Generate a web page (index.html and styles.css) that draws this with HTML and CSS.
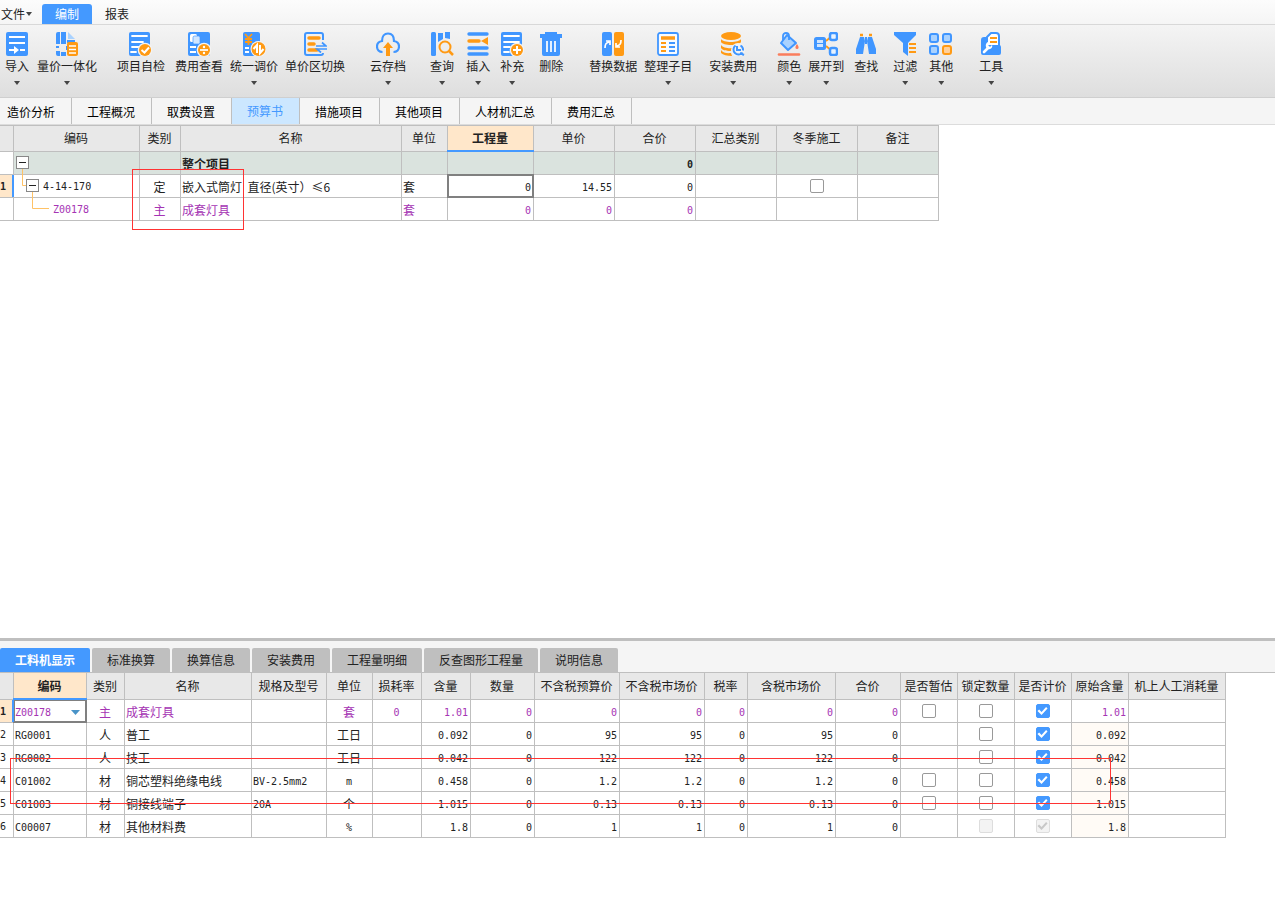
FILE: index.html
```html
<!DOCTYPE html>
<html lang="zh-CN">
<head>
<meta charset="utf-8">
<title>预算书</title>
<link rel="stylesheet" href="styles.css">
</head>
<body>
<nav class="menu">
  <button class="menu-item menu-file">文件<i class="caret"></i></button>
  <button class="menu-item is-active">编制</button>
  <button class="menu-item">报表</button>
</nav>

<div class="toolbar">
  <button class="tool"><svg viewBox="0 0 24 24"><rect x="1" width="22" height="24" rx="2" fill="#4096ff"/><path d="M4 5h16M4 11h16M15 18h5" stroke="#fff" stroke-width="2"/><path d="M4 17h5v-3l5 4-5 4v-3H4z" fill="#fff"/></svg><span>导入</span><i class="caret"></i></button>
  <button class="tool gap-8"><svg viewBox="0 0 24 24"><path d="M3 0h2v12H1V2a2 2 0 0 1 2-2zM6 0h5v12H6zM1 19h4v5H3a2 2 0 0 1-2-2zM6 20h5v4H6zM11 14h3v4h-3zM1 14h3v2H1zM12 0v8h8v3h-8V7z" fill="#4096ff"/><path d="M13 0l7 7h-7z" fill="#a9d2ff"/><rect x="12" y="10" width="11" height="14" rx="2" fill="#ff9a14"/><path d="M14 14h7M14 17.500h7M14 21h7" stroke="#fff" stroke-width="1.600"/></svg><span>量价一体化</span><i class="caret"></i></button>
  <button class="tool gap-20"><svg viewBox="0 0 24 24"><rect x="0" width="21" height="24" rx="2" fill="#4096ff"/><path d="M3 4h15M3 10h11M3 15h7M2 20h5" stroke="#fff" stroke-width="1.800" stroke-linecap="round"/><circle cx="16" cy="18" r="7.300" fill="#f3f3f3"/><circle cx="16" cy="18" r="6" fill="#ff9a14"/><path d="M12.500 18l3 2.500 4.500-5" fill="none" stroke="#fff" stroke-width="2"/></svg><span>项目自检</span></button>
  <button class="tool gap-10"><svg viewBox="0 0 24 24"><rect x="1" width="22" height="24" rx="2" fill="#4096ff"/><rect x="3" y="2" width="7" height="8" rx="1.500" fill="#fff"/><rect x="6" y="4" width="7" height="8" rx="1.500" fill="#cfe5ff" stroke="#4096ff" stroke-width=".7"/><path d="M3 15h6M3 20h6" stroke="#fff" stroke-width="1.800"/><circle cx="17" cy="18" r="7.300" fill="#f3f3f3"/><circle cx="17" cy="18" r="6" fill="#ff9a14"/><path d="M13 18h8" stroke="#fff" stroke-width="1.700"/><circle cx="17" cy="15" r="1.200" fill="#fff"/><circle cx="17" cy="21" r="1.200" fill="#fff"/></svg><span>费用查看</span></button>
  <button class="tool gap-7"><svg viewBox="0 0 24 24"><rect x="1" width="17" height="24" rx="2" fill="#4096ff"/><path d="M3 2l3.500 4L10 2M6.500 6v7M3 7h7M3 10h7" fill="none" stroke="#ff9a14" stroke-width="1.800"/><path d="M3 16h4M3 20h4" stroke="#fff" stroke-width="1.800"/><circle cx="16.500" cy="17" r="8" fill="#f3f3f3"/><circle cx="16.500" cy="17" r="7" fill="#ff9a14"/><path d="M15 21v-8l-3.500 4M18 13v8l3.500-4" fill="none" stroke="#fff" stroke-width="2"/></svg><span>统一调价</span><i class="caret"></i></button>
  <button class="tool gap-7"><svg viewBox="0 0 24 24"><path d="M20 8V3a2 2 0 0 0-2-2H4a2 2 0 0 0-2 2v18a2 2 0 0 0 2 2h14a2 2 0 0 0 2-2" fill="none" stroke="#4096ff" stroke-width="2"/><path d="M6 6h10M6 12h5M6 18h8" stroke="#ff9a14" stroke-width="3.500" stroke-linecap="round"/><path d="M13 14h10l-4-3.500M24 17H14l4 3.500" fill="none" stroke="#4096ff" stroke-width="1.700"/></svg><span>单价区切换</span></button>
  <button class="tool gap-25"><svg viewBox="0 0 24 24"><path d="M6.500 20C3 20 1 17.500 1 14.500S3 9.500 6 9c0-5 2.500-7.500 6-7.500S18 4 18 9c3 .5 5 2.500 5 5.500S21 20 17.500 20" fill="none" stroke="#4096ff" stroke-width="2.200"/><path d="M12 10l5 6h-3v8h-4v-8H7z" fill="#ff9a14"/></svg><span>云存档</span><i class="caret"></i></button>
  <button class="tool gap-24"><svg viewBox="0 0 24 24"><rect x="1" width="5" height="24" rx="1.500" fill="#4096ff"/><path d="M8 1h5v6l-5 3zM15 0h5v7l-5-1z" fill="#4096ff"/><circle cx="15" cy="15" r="5.500" fill="none" stroke="#ff9a14" stroke-width="2"/><path d="M19 19l4 4" stroke="#ff9a14" stroke-width="2.500"/></svg><span>查询</span><i class="caret"></i></button>
  <button class="tool gap-12"><svg viewBox="0 0 24 24"><path d="M3 2h18M3 16h18M3 22h18" stroke="#4096ff" stroke-width="3.400" stroke-linecap="round"/><path d="M3 9h10" stroke="#ff9a14" stroke-width="3.400" stroke-linecap="round"/><path d="M15 9l7-4v8z" fill="#ff9a14"/></svg><span>插入</span><i class="caret"></i></button>
  <button class="tool gap-10"><svg viewBox="0 0 24 24"><rect x="1" width="21" height="24" rx="2" fill="#4096ff"/><path d="M4 4h15M4 10h15M4 15h6M4 20h5" stroke="#fff" stroke-width="1.800" stroke-linecap="round"/><circle cx="17" cy="18" r="7.300" fill="#f3f3f3"/><circle cx="17" cy="18" r="6" fill="#ff9a14"/><path d="M13 18h8M17 14v8" stroke="#fff" stroke-width="2"/></svg><span>补充</span><i class="caret"></i></button>
  <button class="tool gap-15"><svg viewBox="0 0 24 24"><path d="M6 0h12v2h5v4H1V2h5zM3 6h18v16a2 2 0 0 1-2 2H5a2 2 0 0 1-2-2z" fill="#4096ff"/><path d="M8 9v11M12 9v11M16 9v11" stroke="#fff" stroke-width="1.700"/></svg><span>删除</span></button>
  <button class="tool gap-26"><svg viewBox="0 0 24 24"><rect x="1" width="10" height="24" rx="2" fill="#4096ff"/><rect x="13" width="10" height="24" rx="2" fill="#ff9a14"/><path d="M4 16c0-4 1-5 4-6M5 9h4v4M20 8c0 4-1 5-4 6M19 15h-4v-4" fill="none" stroke="#fff" stroke-width="1.700"/></svg><span>替换数据</span></button>
  <button class="tool gap-7"><svg viewBox="0 0 24 24"><rect x="2" y="1" width="20" height="22" rx="2" fill="#f7fbff" stroke="#4096ff" stroke-width="1.800"/><path d="M5 6h14" stroke="#ff9a14" stroke-width="3.500"/><path d="M5 11h5M5 15h5M5 19h5" stroke="#ff9a14" stroke-width="1.800"/><path d="M13 11h6M13 15h6M13 19h6" stroke="#4096ff" stroke-width="1.800"/></svg><span>整理子目</span><i class="caret"></i></button>
  <button class="tool gap-17"><svg viewBox="0 0 24 24"><ellipse cx="10" cy="4" rx="10" ry="4" fill="#ff9a14"/><path d="M0 7c2 4 18 4 20 0v3c-2 4-18 4-20 0zM0 13c2 3 8 3.500 12 3l-1 3c-4 0-9 0-11-3zM0 18c2 3 6 3.500 10 3l1 3C6 24 2 23 0 21z" fill="#ff9a14"/><circle cx="17" cy="18" r="7" fill="#f3f3f3"/><path d="M14.500 13.500a5 5 0 1 0 7 7M19.500 13.500a5 5 0 0 1 2.500 5M16 14v4h4M19 21l4 2" fill="none" stroke="#4096ff" stroke-width="2"/></svg><span>安装费用</span><i class="caret"></i></button>
  <button class="tool gap-20"><svg viewBox="0 0 24 24"><path d="M10 3l9 8-8 7-7-7z" fill="#a9d2ff" stroke="#4096ff" stroke-width="2" stroke-linejoin="round"/><path d="M6 8V4c0-4 6-4 6 0v4" fill="none" stroke="#4096ff" stroke-width="1.800"/><path d="M20 12c3 4 1 5 0 5s-3-1 0-5z" fill="#fa7d5c"/><path d="M2 22.500h20" stroke="#fa7d5c" stroke-width="2.600" stroke-linecap="round"/></svg><span>颜色</span><i class="caret"></i></button>
  <button class="tool gap-7"><svg viewBox="0 0 24 24"><path d="M12 9l6-5M12 14l6 5" stroke="#ff9a14" stroke-width="1.800"/><rect x="0" y="5" width="12" height="13" rx="2.500" fill="#4096ff"/><rect x="3" y="8" width="6" height="7" fill="#cfe5ff"/><path d="M3 11.500h6" stroke="#4096ff"/><rect x="16" y="1" width="7" height="7" rx="2" fill="#e8f3ff" stroke="#4096ff" stroke-width="2.500"/><rect x="16" y="16" width="7" height="7" rx="2" fill="#e8f3ff" stroke="#4096ff" stroke-width="2.500"/></svg><span>展开到</span><i class="caret"></i></button>
  <button class="tool gap-10"><svg viewBox="0 0 24 24"><path d="M6 5h4l1 4-2 13H2v-5zM14 5h4l4 12v5h-7L13 9zM11 5h2v7h-2z" fill="#4096ff"/><path d="M6 3h3M15 3h3" stroke="#ff9a14" stroke-width="2.400"/></svg><span>查找</span></button>
  <button class="tool gap-15"><svg viewBox="0 0 24 24"><path d="M1 0h22v3l-8 8v13l-5-4v-9L1 3z" fill="#4096ff"/><path d="M16 12h7M16 16h7M16 20h7" stroke="#ff9a14" stroke-width="1.800"/></svg><span>过滤</span><i class="caret"></i></button>
  <button class="tool gap-12"><svg viewBox="0 0 24 24"><g fill="#a9d2ff" stroke="#4096ff" stroke-width="2"><rect x="1" y="2" width="8" height="8" rx="2"/><rect x="14" y="2" width="8" height="8" rx="2"/><rect x="1" y="14" width="8" height="8" rx="2"/></g><rect x="14" y="14" width="8" height="8" rx="2" fill="#ffd09a" stroke="#ff9a14" stroke-width="2"/></svg><span>其他</span><i class="caret"></i></button>
  <button class="tool gap-26"><svg viewBox="0 0 24 24"><path d="M8 14V5l4-4h5a3 3 0 0 1 3 3v10z" fill="#fff" stroke="#4096ff" stroke-width="2" stroke-linejoin="round"/><path d="M11 6h7M11 10h7" stroke="#ff9a14" stroke-width="1.800"/><path d="M2 8c0-2 1-3 3-3h2l2 8h11a2 2 0 0 1 2 2v6a2 2 0 0 1-2 2H4a2 2 0 0 1-2-2z" fill="#4096ff"/><path d="M5 20l4-4" stroke="#fff" stroke-width="2.600" stroke-linecap="round"/><path d="M9 10c-3 1-3 6 0 7s5-2 4-4l-2 2-2-2z" fill="#fff"/></svg><span>工具</span><i class="caret"></i></button>
</div>

<nav class="pages">
  <button>造价分析</button><button>工程概况</button><button>取费设置</button><button class="is-active">预算书</button><button>措施项目</button><button>其他项目</button><button>人材机汇总</button><button>费用汇总</button>
</nav>

<main class="upper">
  <table class="grid budget">
    <colgroup><col class="w14"><col class="w126"><col class="w41"><col class="w221"><col class="w46"><col class="w86"><col class="w81"><col class="w81"><col class="w81"><col class="w81"><col class="w81"></colgroup>
    <thead><tr><th></th><th>编码</th><th>类别</th><th>名称</th><th>单位</th><th class="current">工程量</th><th>单价</th><th>合价</th><th>汇总类别</th><th>冬季施工</th><th>备注</th></tr></thead>
    <tbody>
      <tr class="total"><td class="index"></td><td><div class="tree"><svg class="branch"><path d="M8.500 17v6"/></svg><button class="toggle level-1" aria-label="折叠"></button></div></td><td></td><td class="bold">整个项目</td><td></td><td></td><td></td><td class="num bold">0</td><td></td><td></td><td></td></tr>
      <tr><td class="index selected">1</td><td><div class="tree"><svg class="branch"><path d="M8.500 0v10.500H12M18.500 17v6"/></svg><button class="toggle level-2" aria-label="折叠"></button><span class="code">4-14-170</span></div></td><td class="mid">定</td><td>嵌入式筒灯&nbsp; 直径(英寸）≤6</td><td>套</td><td class="num editing">0</td><td class="num">14.55</td><td class="num">0</td><td></td><td class="mid"><input type="checkbox" aria-label="冬季施工"></td><td></td></tr>
      <tr class="main-material"><td class="index"></td><td><div class="tree"><svg class="branch"><path d="M18.500 0v10.500H35"/></svg><span class="code leaf">Z00178</span></div></td><td class="mid">主</td><td>成套灯具</td><td>套</td><td class="num">0</td><td class="num">0</td><td class="num">0</td><td></td><td></td><td></td></tr>
    </tbody>
  </table>
  <div class="mark mark-upper"></div>
</main>

<section class="lower">
  <nav class="details">
    <button class="is-active">工料机显示</button><button>标准换算</button><button>换算信息</button><button>安装费用</button><button>工程量明细</button><button>反查图形工程量</button><button>说明信息</button>
  </nav>
  <div class="detail-body">
  <table class="grid resources">
    <colgroup><col class="w14"><col class="w73"><col class="w38"><col class="w127"><col class="w75"><col class="w46"><col class="w49"><col class="w49"><col class="w64"><col class="w85"><col class="w85"><col class="w43"><col class="w88"><col class="w65"><col class="w57"><col class="w57"><col class="w57"><col class="w57"><col class="w97"></colgroup>
    <thead><tr><th></th><th class="current">编码</th><th>类别</th><th>名称</th><th>规格及型号</th><th>单位</th><th>损耗率</th><th>含量</th><th>数量</th><th>不含税预算价</th><th>不含税市场价</th><th>税率</th><th>含税市场价</th><th>合价</th><th>是否暂估</th><th>锁定数量</th><th>是否计价</th><th>原始含量</th><th>机上人工消耗量</th></tr></thead>
    <tbody>
      <tr class="main-material"><td class="index selected">1</td><td class="editing"><select class="code-select" aria-label="编码"><option>Z00178</option></select></td><td class="mid">主</td><td>成套灯具</td><td></td><td class="mid">套</td><td class="code mid">0</td><td class="num">1.01</td><td class="num">0</td><td class="num">0</td><td class="num">0</td><td class="num">0</td><td class="num">0</td><td class="num">0</td><td class="mid"><input type="checkbox" aria-label="是否暂估"></td><td class="mid"><input type="checkbox" aria-label="锁定数量"></td><td class="mid"><input type="checkbox" aria-label="是否计价" checked></td><td class="num">1.01</td><td></td></tr>
      <tr><td class="index">2</td><td class="code">RG0001</td><td class="mid">人</td><td>普工</td><td></td><td class="mid">工日</td><td></td><td class="num">0.092</td><td class="num">0</td><td class="num">95</td><td class="num">95</td><td class="num">0</td><td class="num">95</td><td class="num">0</td><td></td><td class="mid"><input type="checkbox" aria-label="锁定数量"></td><td class="mid"><input type="checkbox" aria-label="是否计价" checked></td><td class="num original">0.092</td><td></td></tr>
      <tr><td class="index">3</td><td class="code">RG0002</td><td class="mid">人</td><td>技工</td><td></td><td class="mid">工日</td><td></td><td class="num">0.042</td><td class="num">0</td><td class="num">122</td><td class="num">122</td><td class="num">0</td><td class="num">122</td><td class="num">0</td><td></td><td class="mid"><input type="checkbox" aria-label="锁定数量"></td><td class="mid"><input type="checkbox" aria-label="是否计价" checked></td><td class="num original">0.042</td><td></td></tr>
      <tr><td class="index">4</td><td class="code">C01002</td><td class="mid">材</td><td>铜芯塑料绝缘电线</td><td class="code">BV-2.5mm2</td><td class="code mid">m</td><td></td><td class="num">0.458</td><td class="num">0</td><td class="num">1.2</td><td class="num">1.2</td><td class="num">0</td><td class="num">1.2</td><td class="num">0</td><td class="mid"><input type="checkbox" aria-label="是否暂估"></td><td class="mid"><input type="checkbox" aria-label="锁定数量"></td><td class="mid"><input type="checkbox" aria-label="是否计价" checked></td><td class="num original">0.458</td><td></td></tr>
      <tr><td class="index">5</td><td class="code">C01003</td><td class="mid">材</td><td>铜接线端子</td><td class="code">20A</td><td class="mid">个</td><td></td><td class="num">1.015</td><td class="num">0</td><td class="num">0.13</td><td class="num">0.13</td><td class="num">0</td><td class="num">0.13</td><td class="num">0</td><td class="mid"><input type="checkbox" aria-label="是否暂估"></td><td class="mid"><input type="checkbox" aria-label="锁定数量"></td><td class="mid"><input type="checkbox" aria-label="是否计价" checked></td><td class="num original">1.015</td><td></td></tr>
      <tr><td class="index">6</td><td class="code">C00007</td><td class="mid">材</td><td>其他材料费</td><td></td><td class="code mid">%</td><td></td><td class="num">1.8</td><td class="num">0</td><td class="num">1</td><td class="num">1</td><td class="num">0</td><td class="num">1</td><td class="num">0</td><td></td><td class="mid"><input type="checkbox" aria-label="锁定数量" disabled></td><td class="mid"><input type="checkbox" aria-label="是否计价" checked disabled></td><td class="num original">1.8</td><td></td></tr>
    </tbody>
  </table>
  <div class="mark mark-lower"></div>
  </div>
</section>
</body>
</html>
```
FILE: styles.css
```css
* { box-sizing: border-box; }

body {
  margin: 0;
  min-height: 100vh;
  display: flex;
  flex-direction: column;
  overflow-x: hidden;
  background: #fff;
  color: #222;
  font: 12px/20px "Noto Sans CJK SC", sans-serif;
}

button {
  margin: 0;
  padding: 0;
  border: 0;
  background: none;
  color: inherit;
  font: inherit;
  white-space: nowrap;
}

.caret {
  display: block;
  width: 6px;
  height: 4px;
  background: #444;
  clip-path: polygon(0 0, 100% 0, 50% 100%);
}

/* menu */
.menu {
  display: flex;
  height: 25px;
  padding-top: 4px;
  border-bottom: 1px solid #d8d8d8;
  background: linear-gradient(#fcfcfc, #f5f5f5);
}
.menu-item { padding: 0 13px; }
.menu-file {
  display: flex;
  align-items: center;
  gap: 1px;
  padding: 0 10px 0 1px;
}
.menu .is-active {
  border-radius: 3px 3px 0 0;
  background: #4499ff;
  color: #fff;
}

/* toolbar */
.toolbar {
  display: flex;
  align-items: flex-start;
  height: 73px;
  padding: 7px 5px 0;
  border-bottom: 1px solid #cfcfcf;
  background: linear-gradient(#f4f4f4, #dedede);
}
.tool {
  display: flex;
  flex-direction: column;
  flex: none;
  align-items: center;
}
.tool svg { width: 24px; height: 24px; }
.tool .caret { margin-top: 5px; }
.gap-7 { margin-left: 7px; }
.gap-8 { margin-left: 8px; }
.gap-10 { margin-left: 10px; }
.gap-12 { margin-left: 12px; }
.gap-15 { margin-left: 15px; }
.gap-17 { margin-left: 17px; }
.gap-20 { margin-left: 20px; }
.gap-24 { margin-left: 24px; }
.gap-25 { margin-left: 25px; }
.gap-26 { margin-left: 26px; }

/* page tabs */
.pages {
  display: flex;
  height: 27px;
  border-bottom: 1px solid #dcdcdc;
  background: #f5f5f5;
}
.pages button {
  padding: 2px 16px 0 15px;
  border-right: 1px solid #bfbfbf;
  color: #000;
}
.pages button:first-child { padding-left: 7px; }
.pages .is-active {
  padding-top: 0;
  background: #cce7ff;
  color: #4499ff;
}

/* grids */
.grid {
  border-collapse: separate;
  border-spacing: 0;
  table-layout: fixed;
  border-top: 1px solid #bfbfbf;
}
.budget { width: 939px; }
.resources { width: 1226px; }
.grid th,
.grid td {
  position: relative;
  height: 23px;
  padding: 2px 2px 0 1px;
  border-right: 1px solid #bfbfbf;
  border-bottom: 1px solid #bfbfbf;
  line-height: 20px;
  text-align: left;
  vertical-align: top;
  white-space: nowrap;
}
.grid th {
  height: 26px;
  background: #e8e8e8;
  font-weight: 400;
  text-align: center;
}
.resources th { height: 27px; padding-top: 3px; }
.grid th.current {
  background: #ffe7ca;
  font-weight: 700;
}
.grid th.current::after {
  content: "";
  position: absolute;
  z-index: 1;
  right: -1px;
  bottom: -1px;
  left: -1px;
  height: 2px;
  background: #4499ff;
}
.grid .mid { text-align: center; }
.grid .num { text-align: right; }
.grid .num,
.code,
.grid .index,
.code-select { font-family: "DejaVu Sans Mono", monospace; font-size: 10px; }
.grid .num,
.grid td.code { padding-top: 3px; line-height: 19px; }
.grid .index { padding-left: 0; }
.grid .selected {
  background: #ffe7ca;
  font-weight: 700;
}
.grid .selected::after {
  content: "";
  position: absolute;
  z-index: 2;
  top: 0;
  right: -1px;
  bottom: 0;
  width: 2px;
  background: #4499ff;
}
.grid .bold { font-weight: 700; }
.total td:not(.index) { background: #dae3de; }
.main-material td:not(.index) { color: #a534b4; }
.grid .original { background: #fffbf6; }
.editing::after {
  content: "";
  position: absolute;
  inset: -1px;
  border: 2px solid #808080;
  pointer-events: none;
}

.w14 { width: 14px; }
.w38 { width: 38px; }
.w41 { width: 41px; }
.w43 { width: 43px; }
.w46 { width: 46px; }
.w49 { width: 49px; }
.w57 { width: 57px; }
.w64 { width: 64px; }
.w65 { width: 65px; }
.w73 { width: 73px; }
.w75 { width: 75px; }
.w81 { width: 81px; }
.w85 { width: 85px; }
.w86 { width: 86px; }
.w88 { width: 88px; }
.w97 { width: 97px; }
.w126 { width: 126px; }
.w127 { width: 127px; }
.w221 { width: 221px; }

/* tree column */
.tree {
  position: relative;
  display: flex;
  align-items: center;
  height: 21px;
  margin: -2px -2px 0 -1px;
}
.branch {
  position: absolute;
  top: 0;
  left: 0;
  width: 40px;
  height: 23px;
  fill: none;
  stroke: #ffc266;
}
.toggle {
  display: grid;
  place-items: center;
  width: 13px;
  height: 13px;
  border: 1px solid #888;
  background: #fff;
}
.toggle::before {
  content: "";
  width: 7px;
  height: 1px;
  background: #222;
}
.level-1 { margin-left: 2px; }
.level-2 { margin-left: 12px; }
.tree .code { padding: 3px 0 0 4px; }
.tree .leaf { padding-left: 39px; }

/* controls */
input[type="checkbox"] {
  appearance: none;
  display: block;
  width: 14px;
  height: 14px;
  margin: 2px auto 0;
  border: 1px solid #999;
  border-radius: 2px;
  background: #fff;
}
input[type="checkbox"]:checked {
  border-color: #4499ff;
  background: #4499ff;
}
input:checked::before {
  content: "";
  display: block;
  width: 12px;
  height: 12px;
  background: #fff;
  clip-path: polygon(8% 50%, 22% 38%, 42% 58%, 80% 16%, 92% 30%, 42% 84%);
}
input[type="checkbox"]:disabled {
  border-color: #ddd;
  background: #f3f3f3;
}
input:disabled::before { background: #c8c8c8; }

.code-select {
  appearance: none;
  display: block;
  width: 100%;
  height: 20px;
  padding: 0;
  border: 0;
  background: url("data:image/svg+xml,%3Csvg xmlns='http://www.w3.org/2000/svg' width='9' height='5'%3E%3Cpath d='M0 0h9L4.500 5z' fill='%234a94c8'/%3E%3C/svg%3E") no-repeat right 4px center;
  color: inherit;
}

/* panes */
.upper {
  position: relative;
  flex: 1 0 auto;
}
.lower {
  flex: none;
  min-height: 284px;
  border-top: 3px solid #bfbfbf;
}
.details {
  display: flex;
  gap: 2px;
  padding-top: 7px;
  background: #f5f5f5;
}
.details button {
  height: 24px;
  padding: 2px 15px;
  border-radius: 2px 2px 0 0;
  background: #bfbfbf;
}
.details .is-active {
  background: #4499ff;
  color: #fff;
  font-weight: 700;
}
.detail-body {
  position: relative;
  border-top: 1px solid #bfbfbf;
}
.resources { border-top: 0; }

/* red annotation frames */
.mark {
  position: absolute;
  z-index: 3;
  border: 1px solid #ff3333;
  pointer-events: none;
}
.mark-upper {
  top: 44px;
  left: 132px;
  width: 112px;
  height: 61px;
}
.mark-lower {
  top: 85px;
  left: 10px;
  width: 1101px;
  height: 46px;
}
```
